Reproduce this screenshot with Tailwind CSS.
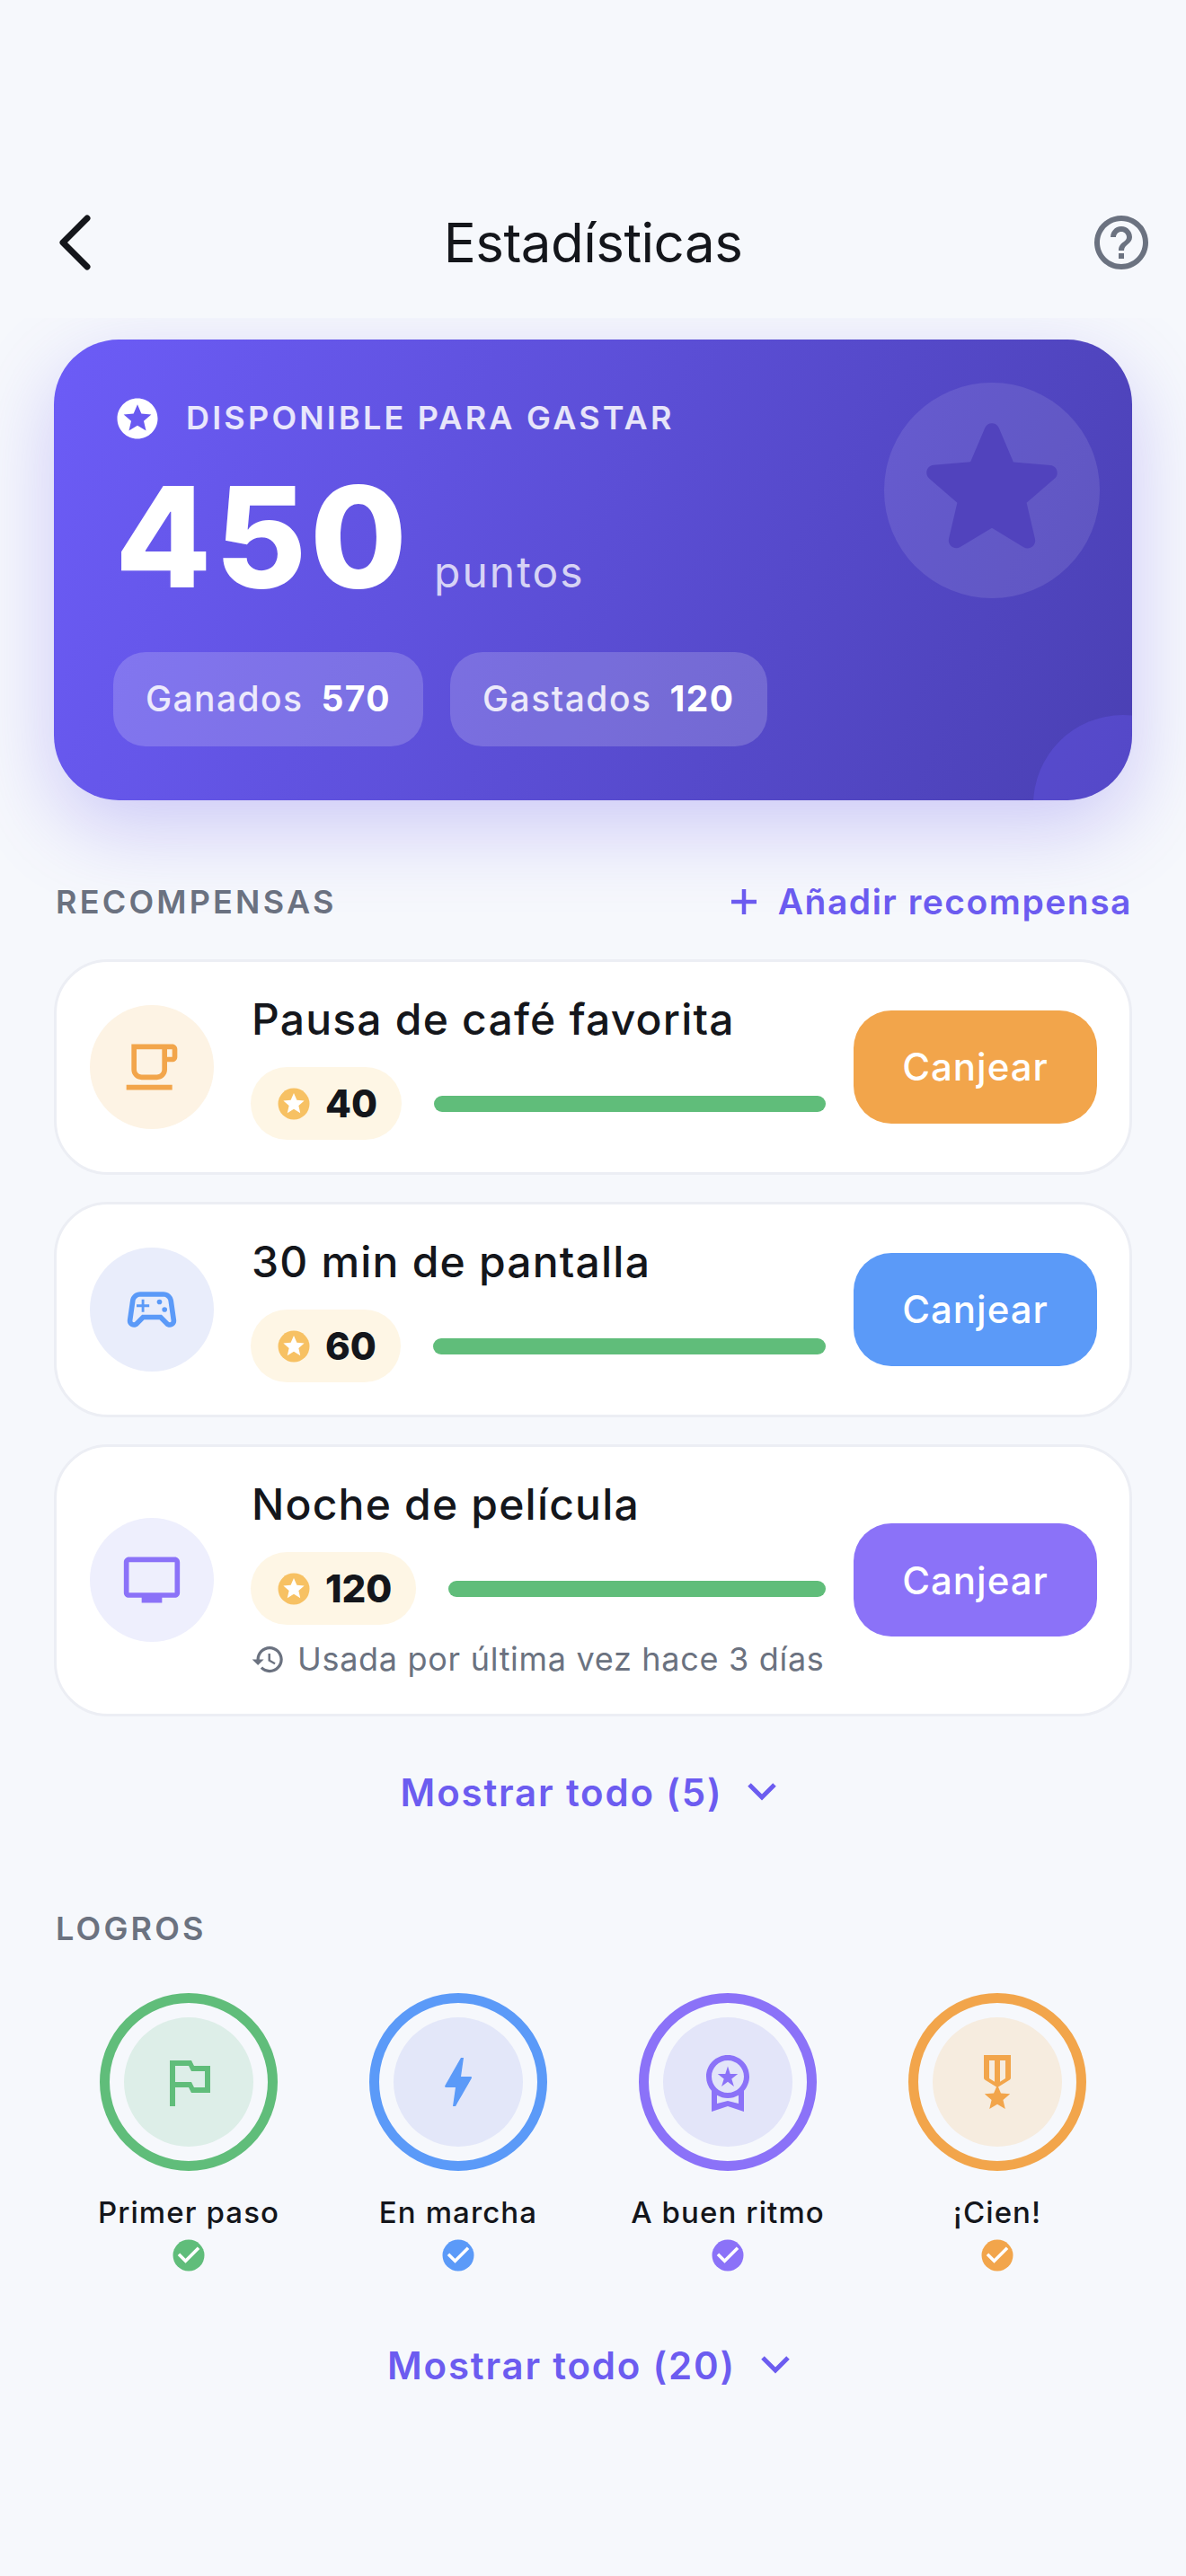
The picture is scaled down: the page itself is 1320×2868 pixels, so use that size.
<!doctype html>
<html lang="es">
<head>
<meta charset="utf-8">
<script src="https://cdn.jsdelivr.net/npm/@tailwindcss/browser@4"></script>
</head>
<body class="bg-[#f6f8fc] font-['Inter',sans-serif] text-[#14161b]">
<div class="w-[1320px] h-[2868px] overflow-hidden flex flex-col">
  <header class="h-[354px] shrink-0 relative">
    <div class="absolute left-0 right-0 top-[232px] text-center text-[60px] leading-[76px] tracking-[-0.5px]">Estadísticas</div>
    <svg class="absolute left-[62px] top-[236px] w-[44px] h-[68px]" viewBox="0 0 44 68" fill="none" stroke="#14161b" stroke-width="7" stroke-linecap="round" stroke-linejoin="round"><path d="M35 7 8 34l27 27"/></svg>
    <svg class="absolute left-[1212px] top-[234px] w-[72px] h-[72px]" viewBox="0 0 24 24" fill="#6b7280"><path d="M11 18h2v-2h-2v2zm1-16C6.48 2 2 6.48 2 12s4.48 10 10 10 10-4.48 10-10S17.52 2 12 2zm0 18c-4.41 0-8-3.59-8-8s3.59-8 8-8 8 3.59 8 8-3.59 8-8 8zm0-14c-2.21 0-4 1.79-4 4h2c0-1.1.9-2 2-2s2 .9 2 2c0 2-3 1.75-3 5h2c0-2.25 3-2.5 3-5 0-2.21-1.79-4-4-4z"/></svg>
  </header>

  <main class="flex-1 overflow-hidden px-[60px] pt-[24px]">
    <section class="relative overflow-hidden rounded-[72px] bg-[linear-gradient(113deg,#6c5cf7,#4a40b3)] shadow-[0_30px_90px_rgba(108,92,240,0.3)] pl-[66px] pt-[65px] h-[513px]">
      <div class="absolute w-[240px] h-[240px] rounded-full bg-white/10 right-[36px] top-[48px] flex items-center justify-center">
        <svg class="w-[204px] h-[204px] -translate-y-[3px]" viewBox="0 0 24 24" fill="#5143bd"><path d="M12 17.27l4.15 2.51c.76.46 1.69-.22 1.49-1.08l-1.1-4.72 3.67-3.18c.67-.58.31-1.68-.57-1.75l-4.83-.41-1.89-4.46c-.34-.81-1.5-.81-1.84 0L9.19 8.63l-4.83.41c-.88.07-1.24 1.17-.57 1.75l3.67 3.18-1.1 4.72c-.2.86.73 1.54 1.49 1.08l4.15-2.5z"/></svg>
      </div>
      <div class="absolute w-[200px] h-[200px] rounded-full bg-[#6c5cf7]/30 -right-[90px] -bottom-[105px]"></div>
      <div class="relative flex items-center h-[45px] ml-[4px]">
        <svg class="w-[54px] h-[54px] -ml-[4.5px] -mr-[4.5px] shrink-0" viewBox="0 0 24 24" fill="#fff"><path d="M11.99 2C6.47 2 2 6.48 2 12s4.47 10 9.99 10C17.52 22 22 17.52 22 12S17.52 2 11.99 2zm4.24 16L12 15.45 7.77 18l1.12-4.81-3.73-3.23 4.92-.42L12 5l1.92 4.53 4.92.42-3.73 3.23L16.23 18z"/></svg>
        <span class="ml-[32px] text-[36px] leading-[45px] font-semibold tracking-[3.2px] text-white/85">DISPONIBLE PARA GASTAR</span>
      </div>
      <div class="relative flex items-baseline mt-[32px] ml-[2px]">
        <span class="text-[156px] leading-[156px] font-extrabold text-white tracking-[4px]">450</span>
        <span class="ml-[26px] text-[48px] leading-[58px] text-white/75 tracking-[2px]">puntos</span>
      </div>
      <div class="relative flex gap-[30px] mt-[50px]">
        <div class="h-[105px] rounded-[36px] bg-white/18 px-[36px] flex items-center gap-[20px] text-[39px] font-medium text-white/85 tracking-[1.4px]">Ganados <span class="font-bold text-white">570</span></div>
        <div class="h-[105px] rounded-[36px] bg-white/18 px-[36px] flex items-center gap-[20px] text-[39px] font-medium text-white/85 tracking-[1.5px]">Gastados <span class="font-bold text-white">120</span></div>
      </div>
    </section>

    <div class="mt-[89px] flex items-center justify-between h-[48px] pl-[2px]">
      <h2 class="text-[36px] font-semibold tracking-[3.2px] text-[#6b7280]">RECOMPENSAS</h2>
      <div class="flex items-center text-[#6c5cf0] text-[39px] font-semibold">
        <svg class="w-[36px] h-[36px] mr-[20px]" viewBox="0 0 36 36" fill="none" stroke="#6c5cf0" stroke-width="4.5"><path d="M18 4v28M4 18h28"/></svg>
        <span class="tracking-[1.5px]">Añadir recompensa</span>
      </div>
    </div>

    <div class="mt-[40px] flex flex-col gap-[30px]">
      <article class="flex items-center bg-white border-[3px] border-[#eceef4] rounded-[60px] pl-[37px] pr-[36px] pt-[35px] pb-[36px]">
        <div class="w-[138px] h-[138px] rounded-full bg-[#fdf3e4] flex items-center justify-center shrink-0">
          <svg class="w-[68px] h-[68px]" viewBox="0 0 24 24" fill="#f2a54b"><path d="M20 3H4v10c0 2.21 1.79 4 4 4h6c2.21 0 4-1.79 4-4v-3h2c1.11 0 2-.89 2-2V5c0-1.11-.89-2-2-2zm-4 10c0 1.1-.9 2-2 2H8c-1.1 0-2-.9-2-2V5h10v8zm4-5h-2V5h2v3zM2 19h18v2H2z"/></svg>
        </div>
        <div class="ml-[41px] flex-1 min-w-0">
          <div class="text-[48px] leading-[58px] font-medium tracking-[1.2px] pl-[1px]">Pausa de café favorita</div>
          <div class="mt-[24px] flex items-center">
            <div class="h-[81px] rounded-full bg-[#fef6e5] pl-[27px] pr-[27px] flex items-center gap-[14px] text-[42px] font-extrabold">
              <svg class="w-[42px] h-[42px]" viewBox="0 0 24 24"><circle cx="12" cy="12" r="10" fill="#f7c163"/><path fill="#fff" d="M12 5.2l1.92 4.4 4.72.42-3.58 3.12 1.08 4.66L12 15.35 7.86 17.8l1.08-4.66-3.58-3.12 4.72-.42z"/></svg>40</div>
            <div class="ml-[36px] flex-1 h-[18px] rounded-full bg-[#60bd7a]"></div>
          </div>
        </div>
        <div class="ml-[31px] w-[271px] h-[126px] rounded-[42px] bg-[#f2a54b] text-white text-[42px] font-medium tracking-[1px] flex items-center justify-center shrink-0">Canjear</div>
      </article>

      <article class="flex items-center bg-white border-[3px] border-[#eceef4] rounded-[60px] pl-[37px] pr-[36px] pt-[35px] pb-[36px]">
        <div class="w-[138px] h-[138px] rounded-full bg-[#e9edfb] flex items-center justify-center shrink-0">
          <svg class="w-[68px] h-[68px]" viewBox="0 0 24 24" fill="#5b9af8"><path d="M21.58 16.09l-1.09-7.66C20.21 6.46 18.52 5 16.53 5H7.47C5.48 5 3.79 6.46 3.51 8.43l-1.09 7.66C2.2 17.63 3.39 19 4.94 19c.68 0 1.32-.27 1.8-.75L9 16h6l2.25 2.25c.48.48 1.13.75 1.8.75 1.56 0 2.75-1.37 2.53-2.91zm-2.1.72c-.08.09-.21.19-.43.19-.15 0-.29-.06-.39-.16L15.83 14H8.17l-2.83 2.84c-.1.1-.24.16-.39.16-.22 0-.35-.1-.43-.19-.08-.09-.16-.24-.14-.44l1.09-7.66C5.6 7.74 6.47 7 7.47 7h9.06c1 0 1.87.74 1.98 1.72l1.09 7.66c.02.2-.05.34-.12.43zM9 8H8v2H6v1h2v2h1v-2h2v-1H9V8z"/><circle cx="17" cy="12" r="1"/><circle cx="15" cy="9" r="1"/></svg>
        </div>
        <div class="ml-[41px] flex-1 min-w-0">
          <div class="text-[48px] leading-[58px] font-medium tracking-[1.2px] pl-[1px]">30 min de pantalla</div>
          <div class="mt-[24px] flex items-center">
            <div class="h-[81px] rounded-full bg-[#fef6e5] pl-[27px] pr-[27px] flex items-center gap-[14px] text-[42px] font-extrabold">
              <svg class="w-[42px] h-[42px]" viewBox="0 0 24 24"><circle cx="12" cy="12" r="10" fill="#f7c163"/><path fill="#fff" d="M12 5.2l1.92 4.4 4.72.42-3.58 3.12 1.08 4.66L12 15.35 7.86 17.8l1.08-4.66-3.58-3.12 4.72-.42z"/></svg>60</div>
            <div class="ml-[36px] flex-1 h-[18px] rounded-full bg-[#60bd7a]"></div>
          </div>
        </div>
        <div class="ml-[31px] w-[271px] h-[126px] rounded-[42px] bg-[#5b9af8] text-white text-[42px] font-medium tracking-[1px] flex items-center justify-center shrink-0">Canjear</div>
      </article>

      <article class="flex items-center bg-white border-[3px] border-[#eceef4] rounded-[60px] pl-[37px] pr-[36px] pt-[35px] pb-[36px]">
        <div class="w-[138px] h-[138px] rounded-full bg-[#eeeffd] flex items-center justify-center shrink-0">
          <svg class="w-[68px] h-[68px]" viewBox="0 0 24 24" fill="#8b72f8"><path d="M21 3H3c-1.1 0-2 .9-2 2v12c0 1.1.9 2 2 2h5v2h8v-2h5c1.1 0 1.99-.9 1.99-2L23 5c0-1.1-.9-2-2-2zm0 14H3V5h18v12z"/></svg>
        </div>
        <div class="ml-[41px] flex-1 min-w-0 pb-[3px]">
          <div class="text-[48px] leading-[58px] font-medium tracking-[1.2px] pl-[1px]">Noche de película</div>
          <div class="mt-[24px] flex items-center">
            <div class="h-[81px] rounded-full bg-[#fef6e5] pl-[27px] pr-[27px] flex items-center gap-[14px] text-[42px] font-extrabold">
              <svg class="w-[42px] h-[42px]" viewBox="0 0 24 24"><circle cx="12" cy="12" r="10" fill="#f7c163"/><path fill="#fff" d="M12 5.2l1.92 4.4 4.72.42-3.58 3.12 1.08 4.66L12 15.35 7.86 17.8l1.08-4.66-3.58-3.12 4.72-.42z"/></svg>120</div>
            <div class="ml-[36px] flex-1 h-[18px] rounded-full bg-[#60bd7a]"></div>
          </div>
          <div class="mt-[16px] flex items-center h-[44px] text-[36px] text-[#6b7280] tracking-[0.7px] whitespace-nowrap">
            <svg class="w-[39px] h-[39px] mr-[13px] shrink-0" viewBox="0 0 24 24" fill="#6b7280"><path d="M13 3c-4.97 0-9 4.03-9 9H1l3.89 3.89.07.14L9 12H6c0-3.87 3.13-7 7-7s7 3.13 7 7-3.13 7-7 7c-1.93 0-3.68-.79-4.94-2.06l-1.42 1.42C8.27 19.99 10.51 21 13 21c4.97 0 9-4.03 9-9s-4.03-9-9-9zm-1 5v5l4.28 2.54.72-1.21-3.5-2.08V8H12z"/></svg>
            <span>Usada por última vez hace 3 días</span>
          </div>
        </div>
        <div class="ml-[31px] w-[271px] h-[126px] rounded-[42px] bg-[#8b72f8] text-white text-[42px] font-medium tracking-[1px] flex items-center justify-center shrink-0">Canjear</div>
      </article>
    </div>

    <div class="mt-[57px] h-[54px] flex items-center justify-center pr-[8px] text-[42px] font-semibold text-[#6c5cf0] tracking-[1.8px]">
      <span>Mostrar todo (5)</span>
      <svg class="ml-[26px] w-[36px] h-[24px]" viewBox="0 0 36 24" fill="none" stroke="#6c5cf0" stroke-width="5"><path d="M4 4l14 14L32 4"/></svg>
    </div>

    <h2 class="mt-[103px] h-[44px] flex items-center pl-[2px] text-[36px] font-semibold tracking-[3.2px] text-[#6b7280]">LOGROS</h2>

    <div class="mt-[50px] grid grid-cols-4">
      <div class="flex flex-col items-center">
        <div class="w-[198px] h-[198px] rounded-full border-[11px] border-[#60bd7a] flex items-center justify-center"><div class="w-[144px] h-[144px] rounded-full bg-[#ddeee8] flex items-center justify-center">
          <svg class="w-[72px] h-[72px]" viewBox="0 0 24 24" fill="#60bd7a"><path d="M14 6l-1-2H5v17h2v-7h5l1 2h7V6h-6zm4 8h-4l-1-2H7V6h5l1 2h5v6z"/></svg></div></div>
        <div class="mt-[26px] text-[33px] leading-[40px] font-medium tracking-[1.1px]">Primer paso</div>
        <svg class="mt-[7px] w-[42px] h-[42px]" viewBox="0 0 24 24"><circle cx="12" cy="12" r="10" fill="#60bd7a"/><path fill="#fff" d="M10 17l-5-5 1.41-1.41L10 14.17l7.59-7.59L19 8l-9 9z"/></svg>
      </div>
      <div class="flex flex-col items-center">
        <div class="w-[198px] h-[198px] rounded-full border-[11px] border-[#5b9af8] flex items-center justify-center"><div class="w-[144px] h-[144px] rounded-full bg-[#e3e7f9] flex items-center justify-center">
          <svg class="w-[72px] h-[72px]" viewBox="0 0 24 24" fill="#5b9af8"><path d="M11 21h-1l1-7H7.5c-.58 0-.57-.32-.38-.66.19-.34.05-.08.07-.12C8.48 10.94 10.42 7.54 13 3h1l-1 7h3.5c.49 0 .56.33.47.51l-.07.15C12.96 17.55 11 21 11 21z"/></svg></div></div>
        <div class="mt-[26px] text-[33px] leading-[40px] font-medium tracking-[1.1px]">En marcha</div>
        <svg class="mt-[7px] w-[42px] h-[42px]" viewBox="0 0 24 24"><circle cx="12" cy="12" r="10" fill="#5b9af8"/><path fill="#fff" d="M10 17l-5-5 1.41-1.41L10 14.17l7.59-7.59L19 8l-9 9z"/></svg>
      </div>
      <div class="flex flex-col items-center">
        <div class="w-[198px] h-[198px] rounded-full border-[11px] border-[#8b72f8] flex items-center justify-center"><div class="w-[144px] h-[144px] rounded-full bg-[#e3e5f9] flex items-center justify-center">
          <svg class="w-[72px] h-[72px]" viewBox="0 0 24 24" fill="#8b72f8"><path d="M9.68 13.69L12 11.93l2.31 1.76-.88-2.85L15.75 9h-2.84L12 6.19 11.09 9H8.25l2.31 1.84-.88 2.85zM20 10c0-4.42-3.58-8-8-8s-8 3.58-8 8c0 2.03.76 3.87 2 5.28V23l6-2 6 2v-7.72c1.24-1.41 2-3.25 2-5.28zm-8-6c3.31 0 6 2.69 6 6s-2.69 6-6 6-6-2.69-6-6 2.69-6 6-6zm0 15l-4 1.02v-3.1c1.18.68 2.54 1.08 4 1.08s2.82-.4 4-1.08v3.1L12 19z"/></svg></div></div>
        <div class="mt-[26px] text-[33px] leading-[40px] font-medium tracking-[1.1px]">A buen ritmo</div>
        <svg class="mt-[7px] w-[42px] h-[42px]" viewBox="0 0 24 24"><circle cx="12" cy="12" r="10" fill="#8b72f8"/><path fill="#fff" d="M10 17l-5-5 1.41-1.41L10 14.17l7.59-7.59L19 8l-9 9z"/></svg>
      </div>
      <div class="flex flex-col items-center">
        <div class="w-[198px] h-[198px] rounded-full border-[11px] border-[#f2a54b] flex items-center justify-center"><div class="w-[144px] h-[144px] rounded-full bg-[#f6ecdf] flex items-center justify-center">
          <svg class="w-[72px] h-[72px]" viewBox="0 0 24 24" fill="#f2a54b"><path fill-rule="evenodd" d="M17 10.43V2H7v8.43c0 .35.18.68.49.86l4.18 2.51-.99 2.34-3.41.29 2.59 2.24L9.07 22 12 20.23 14.93 22l-.78-3.33 2.59-2.24-3.41-.29-.99-2.34 4.18-2.51c.3-.18.48-.5.48-.86zM9 4h2v7.9l-2-1.2V4zm4 0h2v6.7l-2 1.2V4z"/></svg></div></div>
        <div class="mt-[26px] text-[33px] leading-[40px] font-medium tracking-[1.1px]">¡Cien!</div>
        <svg class="mt-[7px] w-[42px] h-[42px]" viewBox="0 0 24 24"><circle cx="12" cy="12" r="10" fill="#f2a54b"/><path fill="#fff" d="M10 17l-5-5 1.41-1.41L10 14.17l7.59-7.59L19 8l-9 9z"/></svg>
      </div>
    </div>

    <div class="mt-[74px] h-[54px] flex items-center justify-center pr-[8px] text-[42px] font-semibold text-[#6c5cf0] tracking-[1.8px]">
      <span>Mostrar todo (20)</span>
      <svg class="ml-[26px] w-[36px] h-[24px]" viewBox="0 0 36 24" fill="none" stroke="#6c5cf0" stroke-width="5"><path d="M4 4l14 14L32 4"/></svg>
    </div>
  </main>
</div>
</body>
</html>
